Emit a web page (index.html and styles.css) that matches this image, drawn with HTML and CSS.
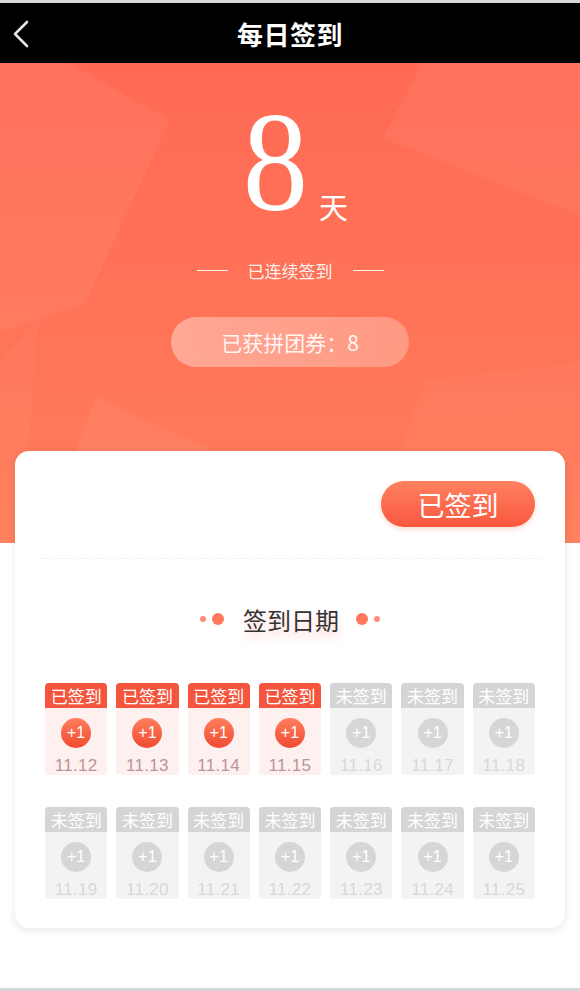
FILE: index.html
```html
<!DOCTYPE html>
<html lang="zh-CN">
<head>
    <meta charset="UTF-8">
    <meta name="viewport" content="width=device-width, initial-scale=1.0">
    <title>每日签到</title>
    <link rel="stylesheet" href="styles.css">
</head>
<body>
    <div class="page">
        <div class="topbar">
            <svg class="back" width="20" height="30" viewBox="0 0 20 30">
                <polyline points="16,3 4,15 16,27" fill="none" stroke="#e6e6e6" stroke-width="2.6" stroke-linecap="round" stroke-linejoin="round"/>
            </svg>
            <h1>每日签到</h1>
        </div>

        <div class="hero">
            <svg class="hero-bg" width="580" height="480" viewBox="0 0 580 480">
                <polygon points="0,0 67,0 170,57 85,240 0,270" fill="#fff" opacity="0.05"/>
                <polygon points="423,0 580,0 580,152 383,75" fill="#fff" opacity="0.05"/>
                <polygon points="96,334 230,395 300,480 40,480" fill="#fff" opacity="0.05"/>
                <polygon points="426,317 580,300 580,480 367,480" fill="#fff" opacity="0.035"/>
                <polygon points="0,300 40,250 20,480 0,480" fill="#fff" opacity="0.03"/>
            </svg>
            <div class="days">
                <span class="num">8</span><span class="unit">天</span>
            </div>
            <div class="streak">
                <span class="dash"></span>
                <span>已连续签到</span>
                <span class="dash"></span>
            </div>
            <div class="coupon">已获拼团券：8</div>
        </div>

        <div class="card">
            <div class="card-top">
                <button class="signed-btn">已签到</button>
            </div>
            <div class="divider"></div>
            <div class="section-title">
                <span class="dot small"></span>
                <span class="dot big"></span>
                <span class="title-text">签到日期</span>
                <span class="dot big"></span>
                <span class="dot small"></span>
            </div>
            <div class="calendar" id="calendar"></div>
        </div>

        <div class="bottom"></div>
    </div>

    <script>
        const days = [12, 13, 14, 15, 16, 17, 18, 19, 20, 21, 22, 23, 24, 25];
        const signedUntil = 15;
        const cal = document.getElementById("calendar");

        days.forEach(function (d) {
            let done = d <= signedUntil;
            let cell = document.createElement("div");
            cell.className = "day" + (done ? " done" : "");
            cell.innerHTML = `
                <div class="day-label">${done ? "已签到" : "未签到"}</div>
                <div class="day-coin">+1</div>
                <div class="day-date">11.${d}</div>
            `;
            cal.appendChild(cell);
        });
    </script>
</body>
</html>
```

FILE: styles.css
```css
*{
    box-sizing: border-box;
}
body{
    margin: 0;
    background: #fff;
    font-family: "Liberation Sans", "Noto Sans CJK SC", sans-serif;
}
.page{
    width: 580px;
    height: 991px;
    border-top: 3px solid #d6d6d6;
    border-bottom: 3px solid #d6d6d6;
    overflow: hidden;
}
.topbar{
    height: 60px;
    background: #000;
    display: flex;
    align-items: center;
    justify-content: center;
    position: relative;
}
.topbar .back{
    position: absolute;
    left: 11px;
    top: 16px;
}
.topbar h1{
    margin: 0;
    color: #fff;
    font-size: 26px;
    font-weight: bold;
    font-family: "Noto Sans CJK SC", sans-serif;
    letter-spacing: 0.5px;
}

/* hero */
.hero{
    height: 480px;
    position: relative;
    background: linear-gradient(180deg, #ff6a55 0%, #ff7257 45%, #ff7d5a 100%);
    display: flex;
    flex-direction: column;
    align-items: center;
    color: #fff;
}
.hero-bg{
    position: absolute;
    left: 0;
    top: 0;
}
.days{
    position: relative;
    display: flex;
    align-items: flex-end;
    margin-top: 25px;
    margin-left: 8px;
    height: 145px;
}
.days .num{
    font-family: "Liberation Serif", serif;
    font-size: 142px;
    line-height: 142px;
    transform: scaleX(0.92);
}
.days .unit{
    font-family: "Noto Sans CJK SC", sans-serif;
    font-size: 29px;
    line-height: 29px;
    margin-left: 8px;
    margin-bottom: 12px;
}
.streak{
    position: relative;
    display: flex;
    align-items: center;
    gap: 20px;
    margin-top: 25px;
    font-family: "Noto Sans CJK SC", sans-serif;
    font-size: 17px;
    color: rgba(255,255,255,0.92);
}
.streak .dash{
    width: 31px;
    height: 1.5px;
    background: rgba(255,255,255,0.9);
}
.coupon{
    position: relative;
    margin-top: 34px;
    width: 238px;
    height: 50px;
    border-radius: 25px;
    background: linear-gradient(90deg, rgba(255,230,225,0.45), rgba(255,220,210,0.35));
    display: flex;
    align-items: center;
    justify-content: center;
    font-family: "Noto Sans CJK SC", sans-serif;
    font-size: 21px;
    color: rgba(255,255,255,0.92);
}

/* card */
.card{
    position: relative;
    margin: -92px 15px 0;
    height: 477px;
    background: #fff;
    border-radius: 14px;
    box-shadow: 0 2px 8px rgba(0,0,0,0.10);
    padding: 30px 30px 0;
}
.card-top{
    display: flex;
    justify-content: flex-end;
}
.signed-btn{
    width: 154px;
    height: 46px;
    border: none;
    border-radius: 23px;
    background: linear-gradient(180deg, #ff8160, #f9573e);
    color: #fff;
    font-family: "Noto Sans CJK SC", sans-serif;
    font-size: 27px;
    padding: 0;
    box-shadow: 0 2px 5px rgba(240,90,60,0.25);
}
.divider{
    margin: 31px -5px 0 -5px;
    border-top: 1.5px dashed #f0f0f0;
}
.section-title{
    display: flex;
    align-items: center;
    justify-content: center;
    margin-top: 45px;
    height: 30px;
}
.title-text{
    font-family: "Noto Sans CJK SC", sans-serif;
    font-size: 24px;
    color: #333;
    margin: 0 13px 0 15px;
    padding: 0 4px;
    position: relative;
    text-shadow: 0 6px 8px rgba(255,120,100,0.35);
}
.dot{
    border-radius: 50%;
    display: inline-block;
}
.dot.big{
    width: 12px;
    height: 12px;
    background: #ff7a5c;
}
.dot.small{
    width: 6px;
    height: 6px;
    background: #ff8c7c;
    margin: 0 6px;
}

/* calendar */
.calendar{
    display: grid;
    grid-template-columns: repeat(7, 1fr);
    column-gap: 9px;
    row-gap: 32px;
    margin-top: 49px;
}
.day{
    height: 92px;
    border-radius: 4px;
    background: #f3f3f3;
    display: flex;
    flex-direction: column;
    align-items: center;
    overflow: hidden;
}
.day-label{
    width: 100%;
    height: 25px;
    background: #d5d5d5;
    color: #fff;
    font-family: "Noto Sans CJK SC", sans-serif;
    font-size: 17px;
    line-height: 25px;
    text-align: center;
}
.day-coin{
    margin-top: 10px;
    width: 30px;
    height: 30px;
    border-radius: 50%;
    background: #d6d6d6;
    color: #fff;
    font-size: 16px;
    line-height: 30px;
    text-align: center;
}
.day-date{
    margin-top: 8px;
    font-size: 17px;
    color: #d8d8d8;
    letter-spacing: 0.3px;
}
.day.done{
    background: #fdf0ee;
}
.day.done .day-label{
    background: #f5553d;
}
.day.done .day-coin{
    background: linear-gradient(180deg, #ff7e5e, #f04b32);
}
.day.done .day-date{
    color: #bb9399;
}
```
